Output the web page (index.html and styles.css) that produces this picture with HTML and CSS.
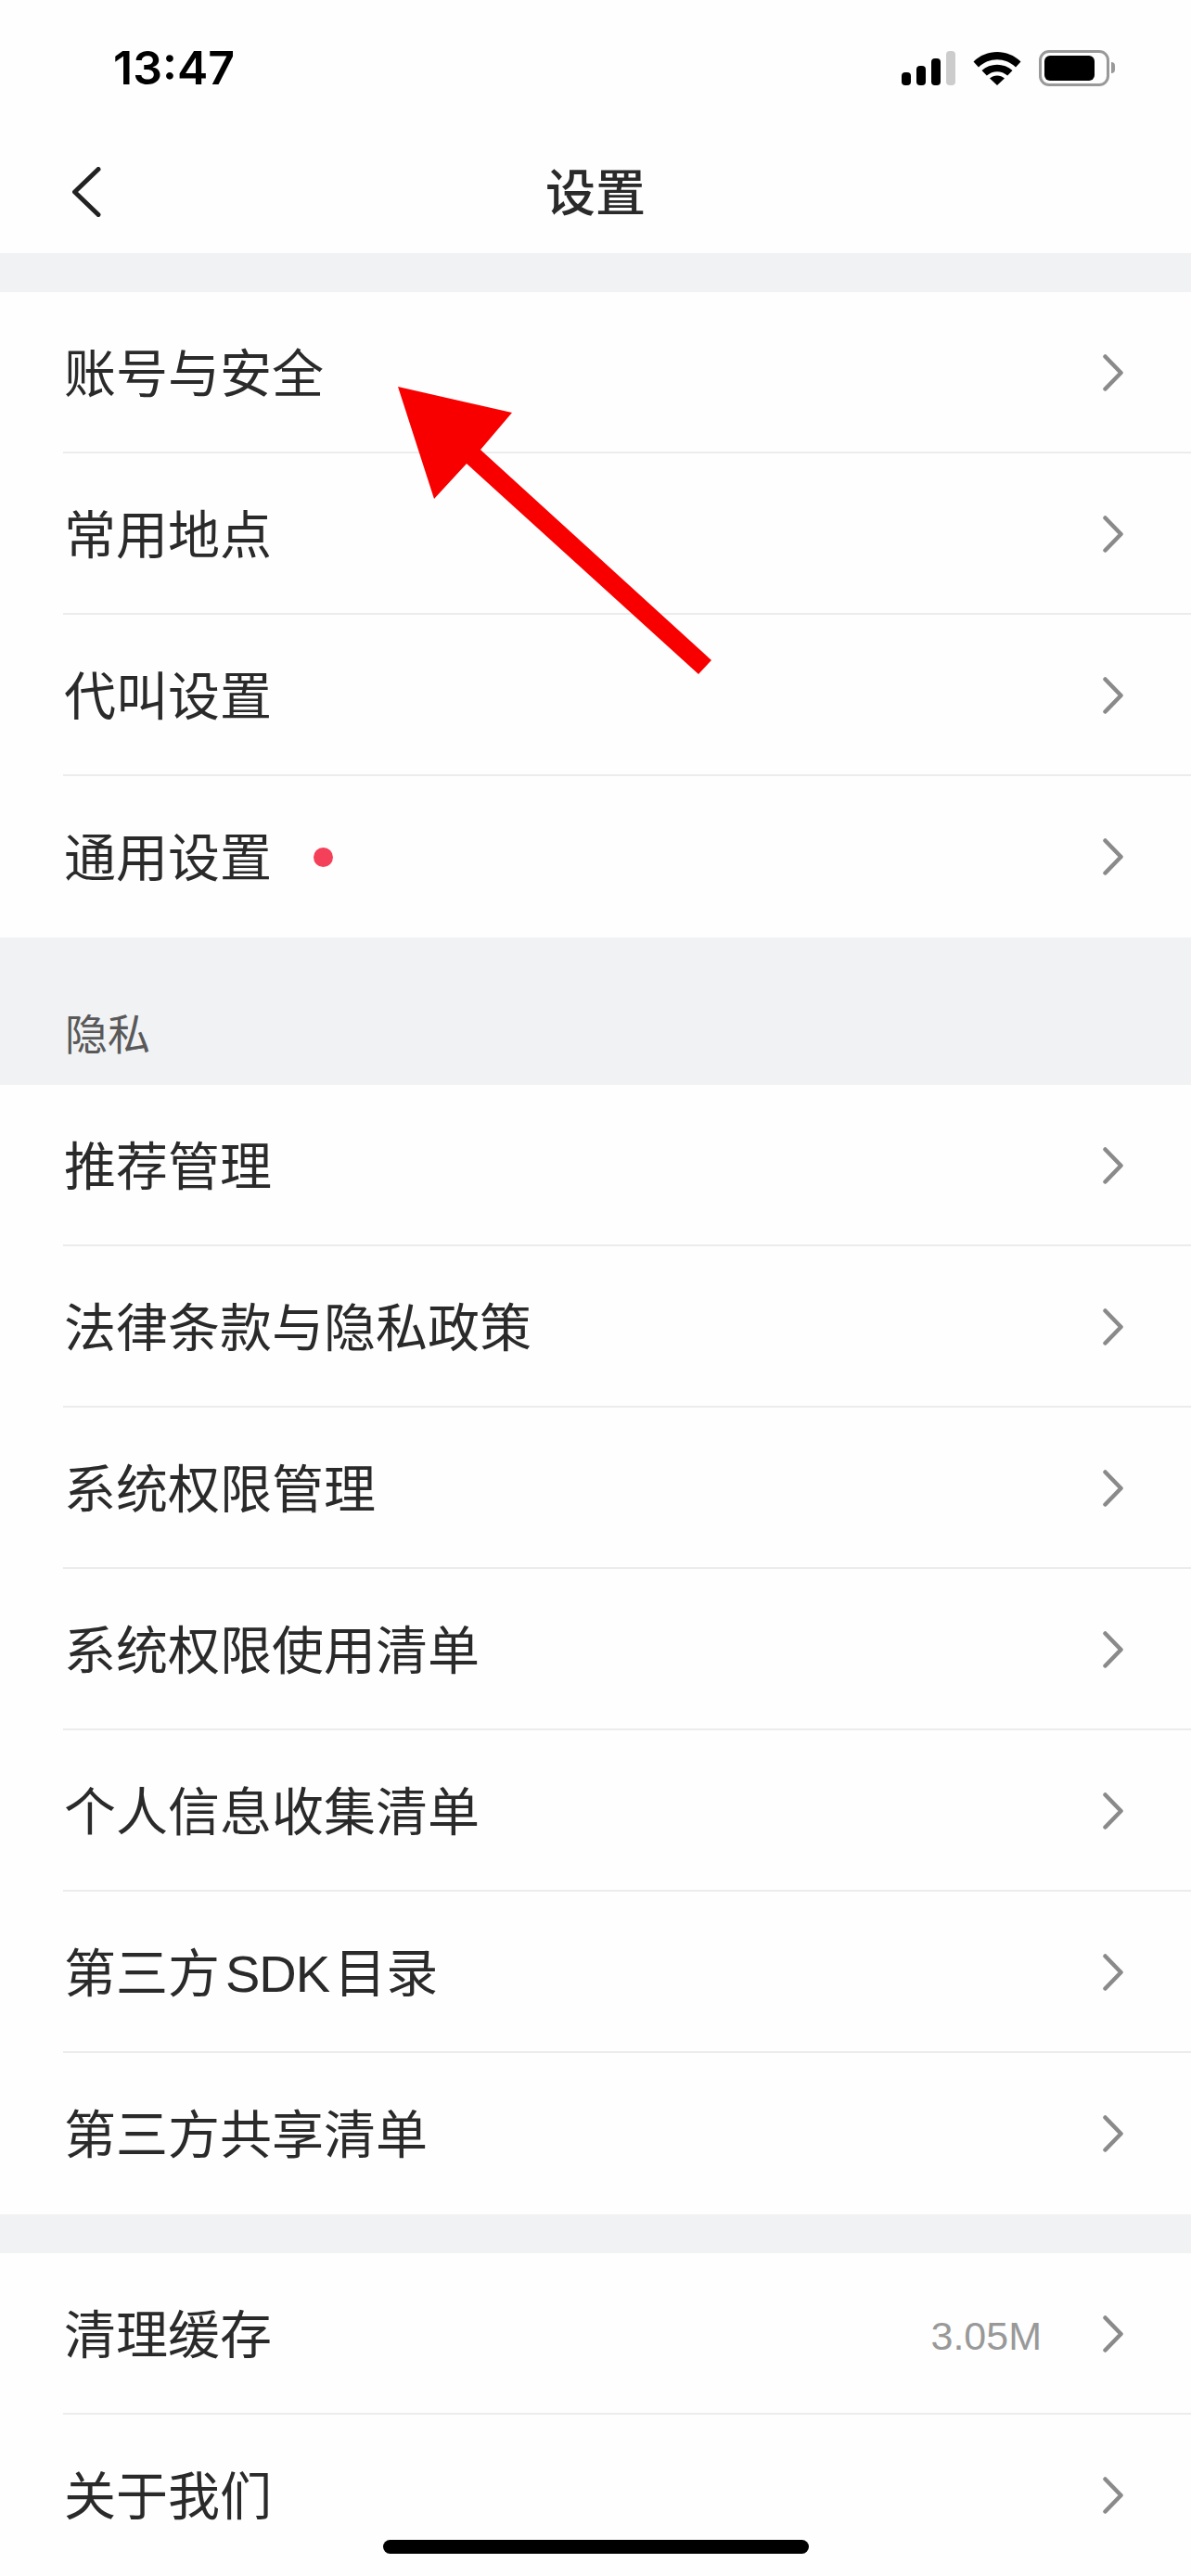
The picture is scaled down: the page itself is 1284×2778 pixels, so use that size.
FILE: index.html
```html
<!DOCTYPE html>
<html>
<head>
  <title>设置</title>
  <meta name="viewport" content="width=device-width, initial-scale=1">
  <link rel="stylesheet" href="styles.css">
</head>
<body>
  <svg class="sprite" width="0" height="0">
    <symbol id="chevron" viewBox="0 0 22 40">
      <path d="M2.5 2.5L19.5 20L2.5 37.5" fill="none" stroke="#8a8a8a" stroke-width="4.5" stroke-linecap="round" stroke-linejoin="round"/>
    </symbol>
  </svg>

  <div class="phone">
    <!-- Status bar -->
    <div class="status-bar">
      <span class="time">13:47</span>
      <div class="status-icons">
        <div class="signal">
          <span class="bar bar-1"></span>
          <span class="bar bar-2"></span>
          <span class="bar bar-3"></span>
          <span class="bar bar-4"></span>
        </div>
        <svg class="wifi" width="52" height="38" viewBox="0 0 52 38">
          <path d="M0.5 12.5C14.5 -1.5 37.5 -1.5 51.5 12.5L46 18.5C35 7.5 17 7.5 6 18.5Z" fill="#000"/>
          <path d="M9.5 22C18.5 13.5 33.5 13.5 42.5 22L37.2 27.5C30.5 21.8 21.5 21.8 14.8 27.5Z" fill="#000"/>
          <path d="M18 30.5C22.5 26.5 29.5 26.5 34 30.5L26 38Z" fill="#000"/>
        </svg>
        <div class="battery">
          <div class="battery-body"><span class="battery-level"></span></div>
          <span class="battery-nub"></span>
        </div>
      </div>
    </div>

    <!-- Title bar -->
    <div class="nav-bar">
      <svg class="back" width="32" height="54" viewBox="0 0 32 54">
        <path d="M29 2.5L3.5 27L29 51.5" fill="none" stroke="#222" stroke-width="5" stroke-linecap="round" stroke-linejoin="round"/>
      </svg>
      <h1 class="nav-title">设置</h1>
    </div>

    <div class="gap"></div>
    <div class="group">
      <div class="row"><span class="row-label">账号与安全</span><svg class="chevron"><use href="#chevron"/></svg></div>
      <div class="row"><span class="row-label">常用地点</span><svg class="chevron"><use href="#chevron"/></svg></div>
      <div class="row"><span class="row-label">代叫设置</span><svg class="chevron"><use href="#chevron"/></svg></div>
      <div class="row"><span class="row-label">通用设置<span class="dot"></span></span><svg class="chevron"><use href="#chevron"/></svg></div>
    </div>

    <div class="group-title">隐私</div>
    <div class="group">
      <div class="row"><span class="row-label">推荐管理</span><svg class="chevron"><use href="#chevron"/></svg></div>
      <div class="row"><span class="row-label">法律条款与隐私政策</span><svg class="chevron"><use href="#chevron"/></svg></div>
      <div class="row"><span class="row-label">系统权限管理</span><svg class="chevron"><use href="#chevron"/></svg></div>
      <div class="row"><span class="row-label">系统权限使用清单</span><svg class="chevron"><use href="#chevron"/></svg></div>
      <div class="row"><span class="row-label">个人信息收集清单</span><svg class="chevron"><use href="#chevron"/></svg></div>
      <div class="row"><span class="row-label">第三方<span class="latin">SDK</span>目录</span><svg class="chevron"><use href="#chevron"/></svg></div>
      <div class="row"><span class="row-label">第三方共享清单</span><svg class="chevron"><use href="#chevron"/></svg></div>
    </div>

    <div class="gap"></div>
    <div class="group">
      <div class="row"><span class="row-label">清理缓存</span><span class="row-value">3.05M</span><svg class="chevron"><use href="#chevron"/></svg></div>
      <div class="row"><span class="row-label">关于我们</span><svg class="chevron"><use href="#chevron"/></svg></div>
    </div>

    <!-- Annotation drawn over the list -->
    <svg class="arrow" width="1284" height="2778" viewBox="0 0 1284 2778">
      <polygon points="429,417 552,445 518,485 767,712 753,727 503,500 468,538" fill="#f90000"/>
    </svg>

    <div class="home-indicator"></div>
  </div>
</body>
</html>
```

FILE: styles.css
```css
* {
  box-sizing: border-box;
}
html, body {
  margin: 0;
  padding: 0;
}
body {
  font-family: "Liberation Sans", "Noto Sans CJK SC", sans-serif;
  color: #2a2a2a;
  background-color: #fff;
}
.sprite {
  position: absolute;
}
.phone {
  position: relative;
  width: 1284px;
  height: 2778px;
  overflow: hidden;
  background-color: #fefefe;
}

/* Status bar */
.status-bar {
  display: flex;
  justify-content: space-between;
  align-items: center;
  height: 146px;
  padding: 0 82px 0 122px;
}
.time {
  font-family: Inter, "Liberation Sans", sans-serif;
  font-size: 50px;
  font-weight: 600;
  color: #000;
  line-height: 1;
}
.status-icons {
  display: flex;
  align-items: center;
  gap: 19px;
}
.signal {
  display: flex;
  align-items: flex-end;
  gap: 6px;
  height: 37px;
}
.bar {
  width: 10px;
  border-radius: 4px;
  background-color: #000;
}
.bar-1 { height: 14px; }
.bar-2 { height: 21px; }
.bar-3 { height: 29px; }
.bar-4 { height: 37px; background-color: #ccc; }
.battery {
  display: flex;
  align-items: center;
  gap: 2px;
}
.battery-body {
  width: 76px;
  height: 39px;
  padding: 3px;
  border: 3px solid #999;
  border-radius: 11px;
}
.battery-level {
  display: block;
  width: 54px;
  height: 100%;
  border-radius: 6px;
  background-color: #000;
}
.battery-nub {
  width: 4px;
  height: 12px;
  border-radius: 0 4px 4px 0;
  background-color: #999;
}

/* Title bar */
.nav-bar {
  position: relative;
  display: flex;
  align-items: center;
  justify-content: center;
  height: 127px;
}
.back {
  position: absolute;
  left: 77px;
  top: 34px;
}
.nav-title {
  margin: 0;
  font-size: 54px;
  font-weight: 500;
  line-height: 1.2;
  color: #2a2a2a;
}

/* List */
.gap {
  height: 42px;
  background-color: #f1f2f4;
}
.group-title {
  height: 159px;
  padding: 74px 0 0 70px;
  font-size: 46px;
  line-height: 62px;
  color: #595959;
  background-color: #f1f2f4;
}
.group {
  padding-left: 68px;
  background-color: #fefefe;
}
.row {
  display: flex;
  align-items: center;
  height: 174px;
  padding: 2px 73px 0 0;
  border-bottom: 2px solid #ececec;
}
.row:last-child {
  padding-top: 0;
  border-bottom: none;
}
.row-label {
  display: flex;
  align-items: center;
  flex: 1;
  padding: 4px 0 0 1px;
  font-size: 56px;
  line-height: 72px;
}
.latin {
  margin: 0 5px 0 6px;
  letter-spacing: -1px;
}
.dot {
  width: 21px;
  height: 21px;
  margin: -4px 0 0 45px;
  border-radius: 50%;
  background-color: #f5405a;
}
.row-value {
  margin: 4px 66px 0 0;
  font-size: 43px;
  color: #999;
}
.chevron {
  width: 22px;
  height: 40px;
}

.arrow {
  position: absolute;
  left: 0;
  top: 0;
  pointer-events: none;
}
.home-indicator {
  position: absolute;
  left: 413px;
  top: 2739px;
  width: 459px;
  height: 15px;
  border-radius: 8px;
  background-color: #000;
}
```
